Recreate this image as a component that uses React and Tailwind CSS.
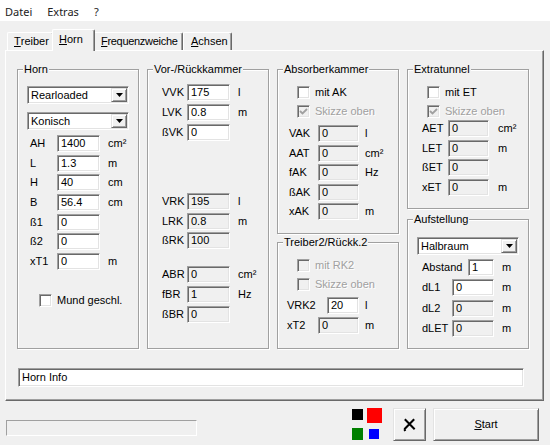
import React from "react";

const sunken =
  "border border-t-[#a0a0a0] border-l-[#a0a0a0] border-b-white border-r-white shadow-[inset_1px_1px_0_#696969,inset_-1px_-1px_0_#e3e3e3]";
const raised =
  "border border-t-[#e3e3e3] border-l-[#e3e3e3] border-b-[#696969] border-r-[#696969] shadow-[inset_1px_1px_0_#fff,inset_-1px_-1px_0_#a0a0a0]";

function Edit({ w, h = "h-[17px]", value, disabled }) {
  return (
    <div
      className={`${w} ${h} ${sunken} ${
        disabled ? "bg-[#f0f0f0]" : "bg-white"
      } pl-[3px] flex items-center whitespace-nowrap overflow-hidden`}
    >
      {value}
    </div>
  );
}

function Row({ lw, label, fw, value, disabled, unit, ug = "ml-[8px]" }) {
  return (
    <div className="flex items-center h-[17px]">
      <span className={`${lw} whitespace-nowrap`}>{label}</span>
      <Edit w={fw} value={value} disabled={disabled} />
      {unit && <span className={ug}>{unit}</span>}
    </div>
  );
}

function Check({ label, checked, disabled }) {
  return (
    <div className="flex items-center h-[13px]">
      <div
        className={`w-[13px] h-[13px] shrink-0 ${sunken} ${
          disabled ? "bg-[#f0f0f0]" : "bg-white"
        } flex items-center justify-center`}
      >
        {checked && (
          <svg viewBox="0 0 9 9" className="w-[9px] h-[9px]">
            <path
              d="M1 4 L3.5 6.5 L8 2"
              fill="none"
              stroke={disabled ? "#a0a0a0" : "#000"}
              strokeWidth="1.8"
            />
          </svg>
        )}
      </div>
      <span
        className={`ml-[5px] whitespace-nowrap ${
          disabled ? "text-[#a0a0a0] [text-shadow:1px_1px_0_#fff]" : ""
        }`}
      >
        {label}
      </span>
    </div>
  );
}

function Combo({ w, value }) {
  return (
    <div className={`${w} h-[18px] ${sunken} bg-white flex p-[1px]`}>
      <div className="flex-1 pl-[2px] flex items-center">{value}</div>
      <div className={`w-[16px] h-full ${raised} bg-[#f0f0f0] flex items-center justify-center`}>
        <svg viewBox="0 0 7 4" className="w-[7px] h-[4px]">
          <path d="M0 0 H7 L3.5 4 Z" fill="#000" />
        </svg>
      </div>
    </div>
  );
}

function Group({ title, cls, children }) {
  return (
    <div
      className={`relative w-[122px] border border-[#a0a0a0] shadow-[inset_1px_1px_0_#fff,1px_1px_0_#fff] ${cls}`}
    >
      <span className="absolute -top-[8px] left-[5px] px-[1px] bg-[#f0f0f0] leading-[14px] whitespace-nowrap">
        {title}
      </span>
      {children}
    </div>
  );
}

function Tab({ w, pl, cls = "", children }) {
  return (
    <div
      className={`${w} ${pl} ${cls} h-[18px] flex items-center border-t border-l border-white border-r border-r-[#696969] shadow-[inset_-1px_0_0_#a0a0a0] rounded-t-[2px] whitespace-nowrap`}
    >
      {children}
    </div>
  );
}

export default function App() {
  return (
    <div className="w-[550px] h-[445px] overflow-hidden bg-[#f0f0f0] text-[11px] leading-[13px] text-black font-['Liberation_Sans',Arial,sans-serif]">
      {/* menu */}
      <div className="h-[21px] bg-white flex items-center pt-[2px] pl-[5px] gap-[15px] text-[11px] font-['Noto_Sans',sans-serif] text-[#222]">
        <span>Datei</span>
        <span>Extras</span>
        <span>?</span>
      </div>

      {/* tabs */}
      <div className="mt-[8px] h-[21px] flex items-end pl-[7px]">
        <Tab w="w-[47px]" pl="pl-[6px]">
          <span className="underline">T</span>reiber
        </Tab>
        <div className="relative z-10 -ml-[2px] -mb-[1px] w-[43px] h-[22px] pl-[6px] pb-[2px] bg-[#f0f0f0] flex items-center border-t border-l border-white border-r border-r-[#696969] shadow-[inset_-1px_0_0_#a0a0a0] rounded-t-[2px]">
          <span className="underline">H</span>orn
        </div>
        <Tab w="w-[90px]" pl="pl-[7px]" cls="-ml-[2px] tracking-[-0.3px]">
          <span className="underline">F</span>requenzweiche
        </Tab>
        <Tab w="w-[49px]" pl="pl-[7px]">
          <span className="underline">A</span>chsen
        </Tab>
      </div>

      {/* tab page */}
      <div className="ml-[5px] w-[539px] h-[351px] border-t border-l border-white border-r border-b border-r-[#696969] border-b-[#696969] shadow-[inset_-1px_-1px_0_#a0a0a0]">
        <div className="mt-[18px] ml-[11px] flex gap-[8px]">
          {/* Horn */}
          <Group title="Horn" cls="h-[280px]">
            <div className="ml-[9px] mt-[16px]">
              <Combo w="w-[102px]" value="Rearloaded" />
            </div>
            <div className="ml-[9px] mt-[8px]">
              <Combo w="w-[102px]" value="Konisch" />
            </div>
            <div className="ml-[12px] mt-[5px] flex flex-col gap-[2.67px]">
              <Row lw="w-[27px]" label="AH" fw="w-[43px]" value="1400" unit="cm²" />
              <Row lw="w-[27px]" label="L" fw="w-[43px]" value="1.3" unit="m" />
              <Row lw="w-[27px]" label="H" fw="w-[43px]" value="40" unit="cm" />
              <Row lw="w-[27px]" label="B" fw="w-[43px]" value="56.4" unit="cm" />
              <Row lw="w-[27px]" label="ß1" fw="w-[43px]" value="0" />
              <Row lw="w-[27px]" label="ß2" fw="w-[43px]" value="0" />
              <Row lw="w-[27px]" label="xT1" fw="w-[43px]" value="0" unit="m" />
            </div>
            <div className="ml-[21px] mt-[24px]">
              <Check label="Mund geschl." />
            </div>
          </Group>

          {/* Vor-/Rückkammer */}
          <Group title="Vor-/Rückkammer" cls="h-[280px]">
            <div className="ml-[14px] mt-[14px] flex flex-col gap-[3px]">
              <Row lw="w-[25px]" label="VVK" fw="w-[43px]" value="175" unit="l" />
              <Row lw="w-[25px]" label="LVK" fw="w-[43px]" value="0.8" unit="m" />
              <Row lw="w-[25px]" label="ßVK" fw="w-[43px]" value="0" />
            </div>
            <div className="ml-[14px] mt-[52px] flex flex-col gap-[2.5px]">
              <Row lw="w-[25px]" label="VRK" fw="w-[43px]" value="195" unit="l" disabled />
              <Row lw="w-[25px]" label="LRK" fw="w-[43px]" value="0.8" unit="m" disabled />
              <Row lw="w-[25px]" label="ßRK" fw="w-[43px]" value="100" disabled />
            </div>
            <div className="ml-[14px] mt-[17px] flex flex-col gap-[3px]">
              <Row lw="w-[25px]" label="ABR" fw="w-[43px]" value="0" unit="cm²" disabled />
              <Row lw="w-[25px]" label="fBR" fw="w-[43px]" value="1" unit="Hz" disabled />
              <Row lw="w-[25px]" label="ßBR" fw="w-[43px]" value="0" disabled />
            </div>
          </Group>

          {/* column 3 */}
          <div className="flex flex-col gap-[8px]">
            <Group title="Absorberkammer" cls="h-[165px]">
              <div className="ml-[19px] mt-[16px] flex flex-col gap-[6px]">
                <Check label="mit AK" />
                <Check label="Skizze oben" checked disabled />
              </div>
              <div className="ml-[11px] mt-[7px] flex flex-col gap-[2.5px]">
                <Row lw="w-[29px]" label="VAK" fw="w-[41px]" value="0" unit="l" ug="ml-[6px]" disabled />
                <Row lw="w-[29px]" label="AAT" fw="w-[41px]" value="0" unit="cm²" ug="ml-[6px]" disabled />
                <Row lw="w-[29px]" label="fAK" fw="w-[41px]" value="0" unit="Hz" ug="ml-[6px]" disabled />
                <Row lw="w-[29px]" label="ßAK" fw="w-[41px]" value="0" disabled />
                <Row lw="w-[29px]" label="xAK" fw="w-[41px]" value="0" unit="m" ug="ml-[6px]" disabled />
              </div>
            </Group>
            <Group title="Treiber2/Rückk.2" cls="h-[107px]">
              <div className="ml-[19px] mt-[16px] flex flex-col gap-[6px]">
                <Check label="mit RK2" disabled />
                <Check label="Skizze oben" disabled />
              </div>
              <div className="ml-[9px] mt-[6px] flex flex-col gap-[3px]">
                <Row lw="w-[40px]" label="VRK2" fw="w-[32px]" value="20" unit="l" ug="ml-[6px]" />
                <Row lw="w-[31px]" label="xT2" fw="w-[41px]" value="0" unit="m" ug="ml-[6px]" disabled />
              </div>
            </Group>
          </div>

          {/* column 4 */}
          <div className="flex flex-col gap-[10px]">
            <Group title="Extratunnel" cls="h-[140px]">
              <div className="ml-[19px] mt-[16px] flex flex-col gap-[6px]">
                <Check label="mit ET" />
                <Check label="Skizze oben" checked disabled />
              </div>
              <div className="ml-[14px] mt-[2px] flex flex-col gap-[2.67px]">
                <Row lw="w-[26px]" label="AET" fw="w-[41px]" value="0" unit="cm²" ug="ml-[9px]" disabled />
                <Row lw="w-[26px]" label="LET" fw="w-[41px]" value="0" unit="m" ug="ml-[9px]" disabled />
                <Row lw="w-[26px]" label="ßET" fw="w-[41px]" value="0" disabled />
                <Row lw="w-[26px]" label="xET" fw="w-[41px]" value="0" unit="m" ug="ml-[9px]" disabled />
              </div>
            </Group>
            <Group title="Aufstellung" cls="h-[130px]">
              <div className="ml-[9px] mt-[17px]">
                <Combo w="w-[102px]" value="Halbraum" />
              </div>
              <div className="ml-[14px] mt-[4px] flex flex-col gap-[3.3px]">
                <Row lw="w-[46px]" label="Abstand" fw="w-[26px]" value="1" unit="m" />
                <Row lw="w-[30px]" label="dL1" fw="w-[42px]" value="0" unit="m" />
                <Row lw="w-[30px]" label="dL2" fw="w-[42px]" value="0" unit="m" disabled />
                <Row lw="w-[30px]" label="dLET" fw="w-[42px]" value="0" unit="m" disabled />
              </div>
            </Group>
          </div>
        </div>

        <div className="mt-[19px] ml-[12px]">
          <Edit w="w-[506px]" h="h-[19px]" value="Horn Info" />
        </div>
      </div>

      {/* bottom bar */}
      <div className="flex items-start pl-[6px] h-[44px]">
        <div className="mt-[19px] w-[191px] h-[16px] border border-t-[#a0a0a0] border-l-[#a0a0a0] border-b-white border-r-white" />
        <div className="ml-[155px] mt-[7px] flex flex-col">
          <div className="flex items-start">
            <div className="mt-[1px] w-[11px] h-[11px] bg-black" />
            <div className="ml-[4px] w-[15px] h-[15px] bg-[#ff0000]" />
          </div>
          <div className="mt-[5px] flex items-start">
            <div className="w-[11px] h-[12px] bg-[#008000]" />
            <div className="ml-[6px] mt-[1px] w-[10px] h-[10px] bg-[#0000ff]" />
          </div>
        </div>
        <div className={`ml-[11px] mt-[7px] w-[33px] h-[33px] ${raised} bg-[#f0f0f0] flex items-center justify-center`}>
          <svg viewBox="0 0 16 16" className="w-[15px] h-[15px]">
            <path d="M3 2.5 L13.5 13 M13 2.5 L2.5 13 M2.5 13 L3.5 15" stroke="#000" strokeWidth="2.2" fill="none" />
          </svg>
        </div>
        <div className={`ml-[7px] mt-[7px] w-[106px] h-[33px] ${raised} bg-[#f0f0f0] flex items-center justify-center`}>
          <span>
            <span className="underline">S</span>tart
          </span>
        </div>
      </div>
    </div>
  );
}
